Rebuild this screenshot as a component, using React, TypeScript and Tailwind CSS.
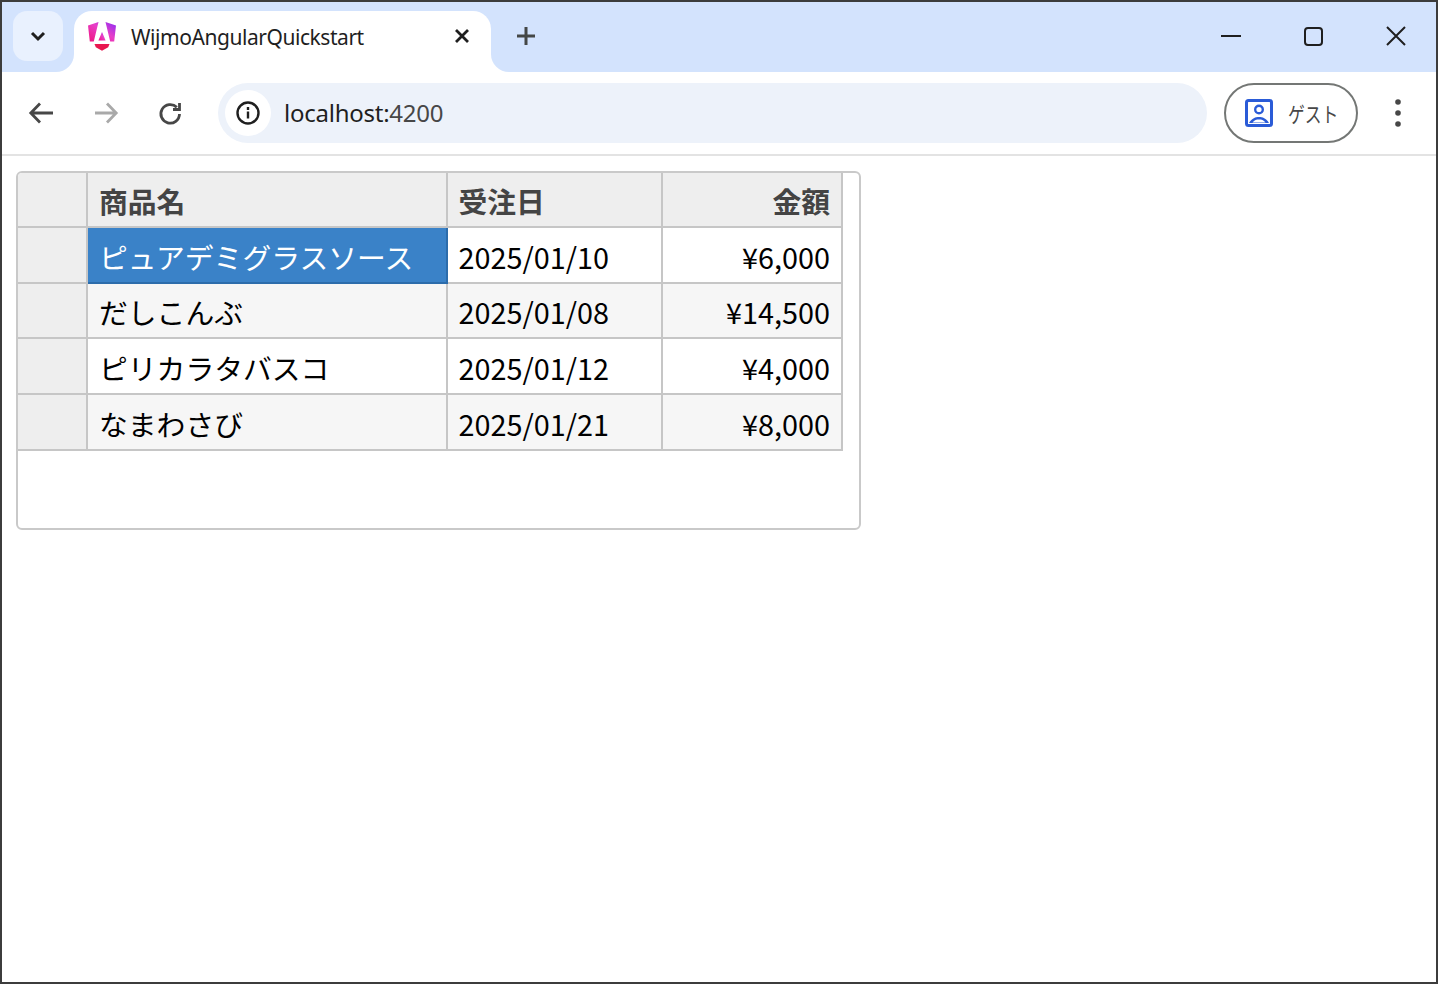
import React from "react";

const rows = [
  { name: "ピュアデミグラスソース", date: "2025/01/10", price: "¥6,000" },
  { name: "だしこんぶ", date: "2025/01/08", price: "¥14,500" },
  { name: "ピリカラタバスコ", date: "2025/01/12", price: "¥4,000" },
  { name: "なまわさび", date: "2025/01/21", price: "¥8,000" },
];

const jp = "font-['Noto_Sans_CJK_JP','Noto_Sans',sans-serif]";
const ui = "font-['Noto_Sans','Noto_Sans_CJK_JP',sans-serif]";

function Cell({ className = "", children }: { className?: string; children?: React.ReactNode }) {
  return (
    <div className={"flex items-center h-full border-r-2 border-b-2 border-[#c6c6c6] px-[11px] pt-[3px] " + className}>
      {children}
    </div>
  );
}

export default function App() {
  return (
    <div className={"relative h-[984px] w-[1438px] overflow-hidden border-2 border-[#3c3c3c] bg-white " + jp}>
      {/* Tab strip */}
      <div className="flex h-[70px] items-start bg-[#d3e3fd] pl-[11px] pt-[9px]">
        <div className="relative z-10 flex h-[50px] w-[50px] items-center justify-center rounded-[14px] bg-[#e9f1fe]">
          <svg width="18" height="18" viewBox="0 0 18 18" fill="none" stroke="#1f1f1f" strokeWidth="3">
            <path d="M3 6l6 6 6-6" />
          </svg>
        </div>
        <div className="relative ml-[11px] flex h-[61px] w-[417px] items-start rounded-t-[18px] bg-white pl-[13px] pt-[10px]">
          <div className="absolute bottom-0 left-[-18px] h-[18px] w-[18px] bg-white">
            <div className="h-full w-full rounded-br-[18px] bg-[#d3e3fd]" />
          </div>
          <div className="absolute bottom-0 right-[-18px] h-[18px] w-[18px] bg-white">
            <div className="h-full w-full rounded-bl-[18px] bg-[#d3e3fd]" />
          </div>
          <svg width="30" height="31" viewBox="0 0 30 31">
            <defs>
              <linearGradient id="ag" x1="0" y1="1" x2="1" y2="0">
                <stop offset="0" stopColor="#f0127c" />
                <stop offset="0.55" stopColor="#e83fc8" />
                <stop offset="1" stopColor="#8a2cf5" />
              </linearGradient>
            </defs>
            <path d="M11.500 1 1 4.500l1.800 16h4zM18.500 1 29 4.500l-1.800 16h-4z" fill="url(#ag)" />
            <path d="M15 11l3.600 8.500h-7.200z" fill="url(#ag)" />
            <path d="M7.500 23h15l-1.300 3.200L15 29.800l-6.200-3.600z" fill="#e8174f" />
          </svg>
          <span className={"ml-[14px] text-[21px] leading-[32px] tracking-[-0.45px] text-[#1f1f1f] " + ui}>WijmoAngularQuickstart</span>
          <svg width="18" height="18" viewBox="0 0 18 18" fill="none" stroke="#1f1f1f" strokeWidth="2.8" className="absolute right-[20px] top-[16px]">
            <path d="M3 3l12 12M15 3 3 15" />
          </svg>
        </div>
        <svg width="22" height="22" viewBox="0 0 22 22" fill="none" stroke="#444746" strokeWidth="3" className="ml-[24px] mt-[14px]">
          <path d="M11 2v18M2 11h18" />
        </svg>
        <div className="ml-auto flex items-start">
          <svg width="22" height="22" viewBox="0 0 22 22" fill="none" stroke="#1f1f1f" strokeWidth="2" className="mr-[60px] mt-[14px]">
            <path d="M1 11h20" />
          </svg>
          <svg width="22" height="22" viewBox="0 0 22 22" fill="none" stroke="#1f1f1f" strokeWidth="2" className="mr-[61px] mt-[14px]">
            <rect x="3" y="3" width="17" height="17" rx="3" />
          </svg>
          <svg width="22" height="22" viewBox="0 0 22 22" fill="none" stroke="#1f1f1f" strokeWidth="2" className="mr-[29px] mt-[14px]">
            <path d="M2 2l18 18M20 2 2 20" />
          </svg>
        </div>
      </div>

      {/* Toolbar */}
      <div className="flex h-[84px] items-center rounded-t-[14px] border-b-2 border-[#e3e3e3] bg-white pb-[1px]">
        <svg width="26" height="26" viewBox="0 0 26 26" fill="none" stroke="#474747" strokeWidth="2.8" className="ml-[26px]">
          <path d="M25 13H3M12 3.500 2.800 13l9.200 9.500" />
        </svg>
        <svg width="26" height="26" viewBox="0 0 26 26" fill="none" stroke="#a9a9a9" strokeWidth="2.8" className="ml-[39px]">
          <path d="M2 13h21M14 3.500l9.200 9.500-9.200 9.500" />
        </svg>
        <svg width="26" height="26" viewBox="0 0 26 26" fill="none" stroke="#474747" strokeWidth="2.8" className="ml-[38px]">
          <path d="M22.500 14a9.300 9.300 0 1 1-2.700-6.700" />
          <path d="M22.500 3v6.500H16" />
        </svg>
        <div className="ml-[35px] mt-[1px] flex h-[60px] w-[989px] items-center rounded-full bg-[#edf2fa] pl-[7px]">
          <div className="flex h-[46px] w-[46px] items-center justify-center rounded-full bg-white">
            <svg width="26" height="26" viewBox="0 0 26 26" fill="none" stroke="#1f1f1f" strokeWidth="2.4">
              <circle cx="13" cy="13" r="10.500" />
              <path d="M13 11.500v7M13 7v3" />
            </svg>
          </div>
          <span className={"ml-[13px] text-[24px] leading-[34px] tracking-[-0.25px] " + ui}>
            <span className="text-[#1f1f1f]">localhost:</span>
            <span className="text-[#474747]">4200</span>
          </span>
        </div>
        <div className="ml-[17px] mt-[1px] flex h-[60px] w-[134px] items-center rounded-full border-2 border-[#747775] pl-[18px]">
          <svg width="30" height="30" viewBox="0 0 30 30" fill="none">
            <rect x="2.500" y="2.500" width="25" height="25" rx="2" stroke="#2a5bd7" strokeWidth="3" />
            <circle cx="15" cy="11.500" r="3.800" stroke="#2a5bd7" strokeWidth="2.400" />
            <path d="M5 25c3-5 6.500-6 10-6s7 1 10 6z" fill="#2a5bd7" />
            <path d="M8.500 24.500c2-2.500 4-3 6.500-3s4.500.5 6.500 3z" fill="#fff" />
          </svg>
          <span className="ml-[14px] origin-left scale-x-[0.8] text-[21px] leading-[30px] -mt-[1px] whitespace-nowrap text-[#474747]">ゲスト</span>
        </div>
        <svg width="10" height="30" viewBox="0 0 10 30" fill="#474747" className="ml-[35px]">
          <circle cx="5" cy="4" r="2.800" />
          <circle cx="5" cy="15" r="2.800" />
          <circle cx="5" cy="26" r="2.800" />
        </svg>
      </div>

      {/* Grid */}
      <div className="ml-[14px] mt-[15px] h-[359px] w-[845px] overflow-hidden rounded-[6px] border-2 border-[#c9c9c9] bg-white text-[28.8px] text-black">
        <div className="grid grid-cols-[70px_359.5px_215.5px_180px] grid-rows-[55px_56px_55px_56px_56px] w-[825px]">
          <Cell className="bg-[#eeeeee]" />
          <Cell className="bg-[#eeeeee] font-bold text-[#444444]">商品名</Cell>
          <Cell className="bg-[#eeeeee] font-bold text-[#444444]">受注日</Cell>
          <Cell className="bg-[#eeeeee] font-bold text-[#444444] justify-end">金額</Cell>
          {rows.map((r, i) => (
            <React.Fragment key={r.name}>
              <Cell className="bg-[#eeeeee]" />
              <Cell className={i === 0 ? "bg-[#3a82c8] text-white border-b-[#2c6cab] border-r-[#2c6cab]" : i === 2 ? "bg-white" : "bg-[#f6f6f6]"}>
                <span className="whitespace-nowrap">{r.name}</span>
              </Cell>
              <Cell className={i % 2 === 0 ? "bg-white" : "bg-[#f6f6f6]"}>{r.date}</Cell>
              <Cell className={"justify-end " + (i % 2 === 0 ? "bg-white" : "bg-[#f6f6f6]")}>{r.price}</Cell>
            </React.Fragment>
          ))}
        </div>
      </div>
    </div>
  );
}
